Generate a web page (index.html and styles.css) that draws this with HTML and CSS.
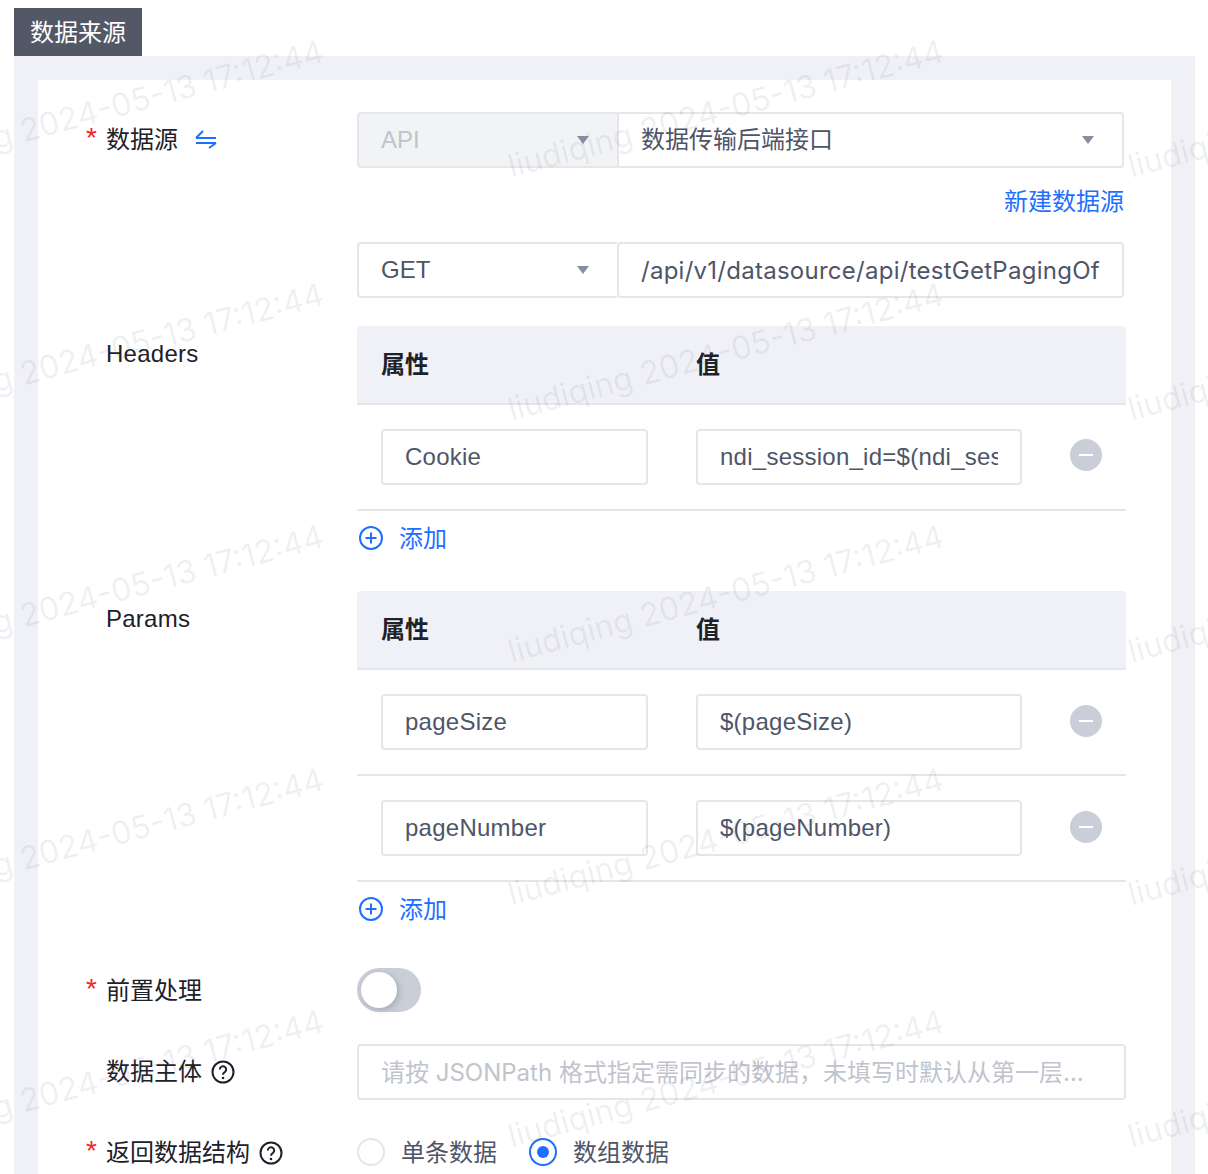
FILE: index.html
```html
<!DOCTYPE html>
<html lang="zh-CN">
<head>
<meta charset="utf-8">
<title>数据来源</title>
<link rel="stylesheet" href="styles.css">
</head>
<body>
<div class="page">
  <div class="tab">数据来源</div>
  <section class="panel">
    <form class="card">
      <div class="row row-source">
        <div class="label"><span class="star">*</span><span>数据源</span>
          <svg class="swap" width="22" height="20" viewBox="0 0 22 20" fill="none" stroke="#1f6fff" stroke-width="2"><path d="M1 9H21M1 9L8 2"/><path d="M1 14H21M21 14L14 19"/></svg>
        </div>
        <div class="control">
          <div class="group">
            <div class="select method disabled"><span>API</span><i class="caret"></i></div>
            <div class="select grow"><span>数据传输后端接口</span><i class="caret"></i></div>
          </div>
          <a class="new-link">新建数据源</a>
          <div class="group">
            <div class="select method"><span>GET</span><i class="caret"></i></div>
            <input class="input grow url" value="/api/v1/datasource/api/testGetPagingOf">
          </div>
        </div>
      </div>

      <div class="row row-table">
        <div class="label label-table"><span class="star"></span><span class="latin">Headers</span></div>
        <div class="control">
          <div class="table-head"><span>属性</span><span>值</span></div>
          <div class="table-row">
            <input class="input latin" value="Cookie">
            <input class="input latin" value="ndi_session_id=$(ndi_session_id)">
            <i class="minus"></i>
          </div>
          <a class="add"><svg width="26" height="26" viewBox="0 0 26 26" fill="none" stroke="#1f6fff" stroke-width="2"><circle cx="13" cy="13" r="11"/><path d="M13 7.5V18.5M7.5 13H18.500"/></svg><span>添加</span></a>
        </div>
      </div>

      <div class="row row-table params">
        <div class="label label-table"><span class="star"></span><span class="latin">Params</span></div>
        <div class="control">
          <div class="table-head"><span>属性</span><span>值</span></div>
          <div class="table-row">
            <input class="input latin" value="pageSize">
            <input class="input latin" value="$(pageSize)">
            <i class="minus"></i>
          </div>
          <div class="table-row">
            <input class="input latin" value="pageNumber">
            <input class="input latin" value="$(pageNumber)">
            <i class="minus"></i>
          </div>
          <a class="add"><svg width="26" height="26" viewBox="0 0 26 26" fill="none" stroke="#1f6fff" stroke-width="2"><circle cx="13" cy="13" r="11"/><path d="M13 7.5V18.5M7.5 13H18.500"/></svg><span>添加</span></a>
        </div>
      </div>

      <div class="row row-switch">
        <div class="label"><span class="star">*</span><span>前置处理</span></div>
        <div class="control"><div class="switch"><i class="knob"></i></div></div>
      </div>

      <div class="row row-body">
        <div class="label"><span class="star"></span><span>数据主体</span><svg class="help" width="24" height="24" viewBox="0 0 24 24" fill="none"><circle cx="12" cy="12" r="10.500" stroke="#1d2129" stroke-width="2"/><path d="M8.800 9.500a3.200 3.200 0 1 1 5 2.600c-1.100.7-1.800 1.300-1.800 2.600" stroke="#1d2129" stroke-width="2"/><circle cx="12" cy="18" r="1.300" fill="#1d2129"/></svg></div>
        <div class="control"><input class="input full" placeholder="请按 JSONPath 格式指定需同步的数据，未填写时默认从第一层开始读取"></div>
      </div>

      <div class="row row-radio">
        <div class="label"><span class="star">*</span><span>返回数据结构</span><svg class="help" width="24" height="24" viewBox="0 0 24 24" fill="none"><circle cx="12" cy="12" r="10.500" stroke="#1d2129" stroke-width="2"/><path d="M8.800 9.500a3.200 3.200 0 1 1 5 2.600c-1.100.7-1.800 1.300-1.800 2.600" stroke="#1d2129" stroke-width="2"/><circle cx="12" cy="18" r="1.300" fill="#1d2129"/></svg></div>
        <div class="control radios">
          <span class="radio"><i class="dot"></i>单条数据</span>
          <span class="radio on"><i class="dot"></i>数组数据</span>
        </div>
      </div>
    </form>
  </section>
  <div class="watermark" aria-hidden="true">
    <span>liudiqing 2024-05-13 17:12:44</span><span>liudiqing 2024-05-13 17:12:44</span><span>liudiqing 2024-05-13 17:12:44</span>
    <span>liudiqing 2024-05-13 17:12:44</span><span>liudiqing 2024-05-13 17:12:44</span><span>liudiqing 2024-05-13 17:12:44</span>
    <span>liudiqing 2024-05-13 17:12:44</span><span>liudiqing 2024-05-13 17:12:44</span><span>liudiqing 2024-05-13 17:12:44</span>
    <span>liudiqing 2024-05-13 17:12:44</span><span>liudiqing 2024-05-13 17:12:44</span><span>liudiqing 2024-05-13 17:12:44</span>
    <span>liudiqing 2024-05-13 17:12:44</span><span>liudiqing 2024-05-13 17:12:44</span><span>liudiqing 2024-05-13 17:12:44</span>
  </div>
</div>
</body>
</html>
```
FILE: styles.css
```css
* { box-sizing: border-box; }
html, body { margin: 0; height: 1174px; overflow: hidden; background: #fff; }
body {
  font-family: "Liberation Sans", "Noto Sans CJK SC", sans-serif;
  font-size: 24px;
  line-height: 32px;
  color: #1d2129;
}
.page { position: relative; height: 1174px; overflow: hidden; padding: 8px 13px 0 14px; }
.tab {
  width: 128px; height: 48px; background: #525866; color: #fff; padding-top: 1px;
  display: flex; align-items: center; justify-content: center;
}
.panel { background: #f0f1f6; padding: 24px 24px 0; }
.card { background: #fff; padding: 32px 45px 40px 0; }
.row { display: flex; }
.label {
  width: 319px; flex: none; display: flex; align-items: center;
  padding-left: 48px; height: 56px;
}
.latin { letter-spacing: .25px; }
.star { width: 20px; flex: none; color: #f5222d; font-size: 28px; line-height: 24px; height: 24px; margin-top: -4px; }
.swap { margin-left: 17px; margin-top: -3px; }
.help { margin-left: 9px; }
.control { flex: 1; min-width: 0; }
.group { display: flex; width: 767px; }
.select {
  height: 56px; border: 2px solid #e5e6eb; border-radius: 4px; padding: 0 24px 0 22px;
  display: flex; align-items: center; justify-content: space-between; color: #4e5569;
}
.method { width: 260px; border-radius: 4px 0 0 4px; border-right: 0; }
.disabled { background: #f2f3f5; color: #c0c4cc; }
.grow { flex: 1; min-width: 0; border-radius: 0 4px 4px 0; }
.caret {
  width: 0; height: 0; border-left: 6px solid transparent; border-right: 6px solid transparent;
  border-top: 8px solid #868e9e; margin-right: 4px;
}
.new-link {
  display: block; width: 767px; text-align: right; color: #1f6fff;
  height: 74px; padding-top: 18px;
}
.input {
  height: 56px; border: 2px solid #e5e6eb; border-radius: 4px; padding: 0 22px;
  font: inherit; color: #4e5569; outline: 0; background: transparent; min-width: 0; width: 100%;
}
.input::placeholder { color: #c0c4cc; }
.input:placeholder-shown { text-overflow: ellipsis; }
.url { width: auto; font-family: Inter, sans-serif; letter-spacing: .26px; }
.row-table { margin-top: 28px; }
.label-table { align-items: flex-start; padding-top: 12px; height: auto; }
.label-table .star { margin-top: 0; }
.params { margin-top: 24px; }
.table-head {
  height: 79px; background: #f0f1f6; border-bottom: 2px solid #e5e6eb; border-radius: 4px 4px 0 0;
  padding: 0 24px; display: grid; grid-template-columns: 315px 1fr; align-items: center; font-weight: 700;
}
.table-row {
  height: 106px; border-bottom: 2px solid #e5e6eb; padding: 24px 24px 0;
  display: grid; grid-template-columns: 267px 326px 32px; column-gap: 48px; align-items: start;
}
.minus {
  width: 32px; height: 32px; border-radius: 50%; background: #c9ced9; margin-top: 10px;
  display: flex; align-items: center; justify-content: center;
}
.params .minus { margin-top: 11px; }
.minus::before { content: ""; width: 14px; height: 2px; background: #fff; }
.add { display: flex; align-items: center; height: 56px; color: #1f6fff; margin-left: 1px; gap: 15px; }
.add svg { margin-top: -2px; }
.row-switch { margin-top: 30px; }
.row-switch .label { height: 44px; padding-top: 2px; }
.switch { width: 64px; height: 44px; border-radius: 22px; background: #c9ced9; padding: 4px; }
.knob {
  display: block; width: 36px; height: 36px; border-radius: 50%; background: #fff;
  box-shadow: 2px 2px 6px rgba(0,0,0,.18);
}
.row-body { margin-top: 32px; }
.full { display: block; font-family: Inter, "Noto Sans CJK SC", sans-serif; }
.row-radio { margin-top: 24px; }
.row-radio .label { padding-top: 2px; }
.radios { display: flex; gap: 32px; align-items: center; }
.radio { display: inline-flex; align-items: center; gap: 16px; color: #4e5569; padding-top: 2px; }
.dot {
  width: 28px; height: 28px; border-radius: 50%; border: 2px solid #e5e6eb; display: flex;
  align-items: center; justify-content: center; margin-top: -2px;
}
.on .dot { border-color: #1f6fff; }
.on .dot::before { content: ""; width: 12px; height: 12px; border-radius: 50%; background: #1f6fff; }
.watermark {
  position: absolute; left: -204px; top: -12px; pointer-events: none;
  display: grid; grid-template-columns: repeat(3, 620px); grid-auto-rows: 242.5px;
  place-items: center; font-family: Inter, sans-serif; font-size: 32px; color: rgba(80, 85, 100, .09); white-space: nowrap;
}
.watermark span { transform: rotate(-15deg); }
```
